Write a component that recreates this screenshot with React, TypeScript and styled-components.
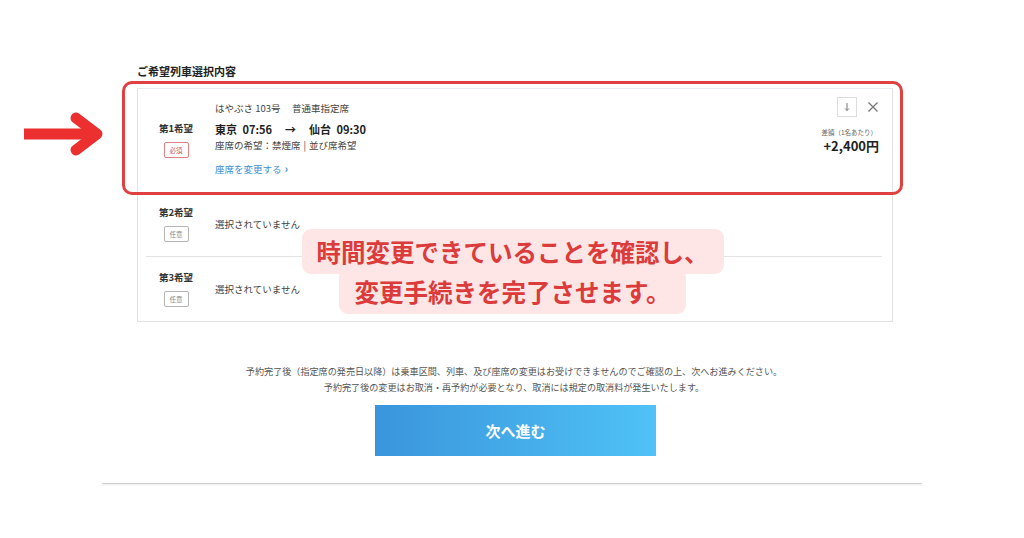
import styled, { createGlobalStyle } from 'styled-components';

const GlobalStyle = createGlobalStyle`
  body {
    margin:0;
    background:#fff;
    font-family:"Noto Sans CJK JP","Noto Sans",sans-serif;
    color:#333;
  }
`

const Page = styled.div`
  position:relative;
  width:1024px;
  height:538px;
  padding-top:63px;
  box-sizing:border-box;
`

const Section = styled.div`
  position:relative;
  width:756px;
  margin-left:137px;
`

const Heading = styled.div`
  font-size:11px;
  font-weight:700;
  line-height:17px;
  color:#222;
  margin-bottom:8px;
`

const Card = styled.div`
  position:relative;
  border:1px solid #e2e2e2;
  border-top-color:#e8ecf0;
`

const Row = styled.div<{ $h: number; $pb?: number; $divider?: boolean }>`
  position:relative;
  display:grid;
  grid-template-columns:76px 1fr auto;
  align-items:center;
  height:${p => p.$h}px;
  padding-bottom:${p => p.$pb || 0}px;
  box-sizing:border-box;
  &::after {
    content:'';
    display:${p => (p.$divider ? 'block' : 'none')};
    position:absolute;
    left:8px;
    right:10px;
    bottom:0;
    height:1px;
    background:#e4e4e4;
  }
`

const LabelCol = styled.div`
  display:flex;
  flex-direction:column;
  align-items:center;
  gap:7px;
`

const Label = styled.div`
  font-size:9.5px;
  font-weight:700;
  color:#333;
  line-height:13px;
`

const Badge = styled.div<{ $required?: boolean }>`
  font-size:6.5px;
  line-height:10px;
  padding:2px 5px;
  border:1px solid ${p => (p.$required ? '#e08080' : '#b5b5b5')};
  color:${p => (p.$required ? '#d05050' : '#888')};
  border-radius:2px;
`

const Content = styled.div`
  align-self:start;
  display:flex;
  flex-direction:column;
  padding:13px 0 0 1px;
`

const Small = styled.div`
  font-size:9.5px;
  line-height:13px;
  color:#444;
  white-space:pre;
  i { font-style:normal; margin:0 3px; }
`

const Route = styled.div`
  font-size:11px;
  font-weight:700;
  line-height:16px;
  color:#222;
  margin:6px 0 2px;
  word-spacing:3px;
  span { margin:0 13px; }
`

const Link = styled.div`
  font-size:9.5px;
  line-height:13px;
  color:#3b8fd6;
  margin-top:10px;
  b { font-size:11px; margin-left:3px; }
`

const Right = styled.div`
  align-self:start;
  display:flex;
  flex-direction:column;
  align-items:flex-end;
  padding:8px 13px 0 0;
`

const Icons = styled.div`
  display:flex;
  align-items:center;
  gap:10px;
  margin-bottom:10px;
`

const IconBox = styled.div`
  width:18px;
  height:18px;
  border:1px solid #ddd;
  display:flex;
  align-items:center;
  justify-content:center;
`

const Note = styled.div`
  font-size:6.5px;
  color:#666;
  line-height:10px;
  margin-right:2px;
`

const Price = styled.div`
  font-size:13px;
  font-weight:700;
  color:#222;
  line-height:18px;
`

const Empty = styled.div`
  font-size:9.5px;
  color:#444;
  padding-left:1px;
`

const Highlight = styled.div`
  position:absolute;
  left:-16px;
  top:-8px;
  width:781px;
  height:114px;
  border:3px solid #e04040;
  border-radius:10px;
  box-sizing:border-box;
  pointer-events:none;
`

const Callout = styled.div`
  position:absolute;
  left:-5px;
  right:0;
  top:169px;
  text-align:center;
  font-size:24.5px;
  font-weight:700;
  line-height:40px;
  color:#dc3b3b;
  span {
    background:#fde6e5;
    padding:5px 15px 5px;
    border-radius:9px;
    -webkit-box-decoration-break:clone;
    box-decoration-break:clone;
  }
`

const Notes = styled.div`
  margin-top:41px;
  text-align:center;
  font-size:9.1px;
  line-height:16px;
  color:#555;
  padding-left:4px;
`

const Button = styled.button`
  display:block;
  width:281px;
  height:51px;
  margin:10px 0 0 375px;
  border:none;
  background:linear-gradient(90deg,#3a95dc,#4fc2f6);
  color:#fff;
  font-family:inherit;
  font-size:15px;
  font-weight:700;
`

const Rule = styled.div`
  width:820px;
  height:1px;
  margin:27px auto 0;
  background:#cfcfcf;
  box-shadow:0 1px 2px rgba(0,0,0,0.12);
`

const Arrow = styled.svg`
  position:absolute;
  left:18px;
  top:110px;
`

export default function App() {
  return (
    <Page>
      <GlobalStyle />
      <Arrow width="92" height="52" viewBox="18 110 92 52">
        <line x1="24" y1="134" x2="94" y2="134" stroke="#ec2f2f" strokeWidth="11" />
        <polyline points="76,118 97,134 76,150" fill="none" stroke="#ec2f2f" strokeWidth="11" strokeLinecap="round" strokeLinejoin="round" />
      </Arrow>
      <Section>
        <Heading>ご希望列車選択内容</Heading>
        <Card>
          <Row $h={108} $pb={6}>
            <LabelCol>
              <Label>第1希望</Label>
              <Badge $required>必須</Badge>
            </LabelCol>
            <Content>
              <Small>はやぶさ 103号　 普通車指定席</Small>
              <Route>東京 07:56<span>→</span>仙台 09:30</Route>
              <Small>座席の希望：禁煙席<i>|</i>並び席希望</Small>
              <Link>座席を変更する<b>›</b></Link>
            </Content>
            <Right>
              <Icons>
                <IconBox>
                  <svg width="8" height="10" viewBox="0 0 8 10">
                    <path d="M4 1 V8.5 M2 6.5 L4 8.5 L6 6.5" stroke="#777" strokeWidth="1" fill="none" />
                  </svg>
                </IconBox>
                <svg width="12" height="12" viewBox="0 0 12 12">
                  <path d="M1.5 1.5 L10.5 10.5 M10.5 1.5 L1.5 10.5" stroke="#777" strokeWidth="1.3" />
                </svg>
              </Icons>
              <Note>差額（1名あたり）</Note>
              <Price>+2,400円</Price>
            </Right>
          </Row>
          <Row $h={60} $pb={7} $divider>
            <LabelCol>
              <Label>第2希望</Label>
              <Badge>任意</Badge>
            </LabelCol>
            <Empty>選択されていません</Empty>
          </Row>
          <Row $h={64}>
            <LabelCol>
              <Label>第3希望</Label>
              <Badge>任意</Badge>
            </LabelCol>
            <Empty>選択されていません</Empty>
          </Row>
          <Highlight />
        </Card>
        <Callout>
          <span>時間変更できていることを確認し、<br />変更手続きを完了させます。</span>
        </Callout>
      </Section>
      <Notes>
        予約完了後（指定席の発売日以降）は乗車区間、列車、及び座席の変更はお受けできませんのでご確認の上、次へお進みください。<br />
        予約完了後の変更はお取消・再予約が必要となり、取消には規定の取消料が発生いたします。
      </Notes>
      <Button>次へ進む</Button>
      <Rule />
    </Page>
  );
}
